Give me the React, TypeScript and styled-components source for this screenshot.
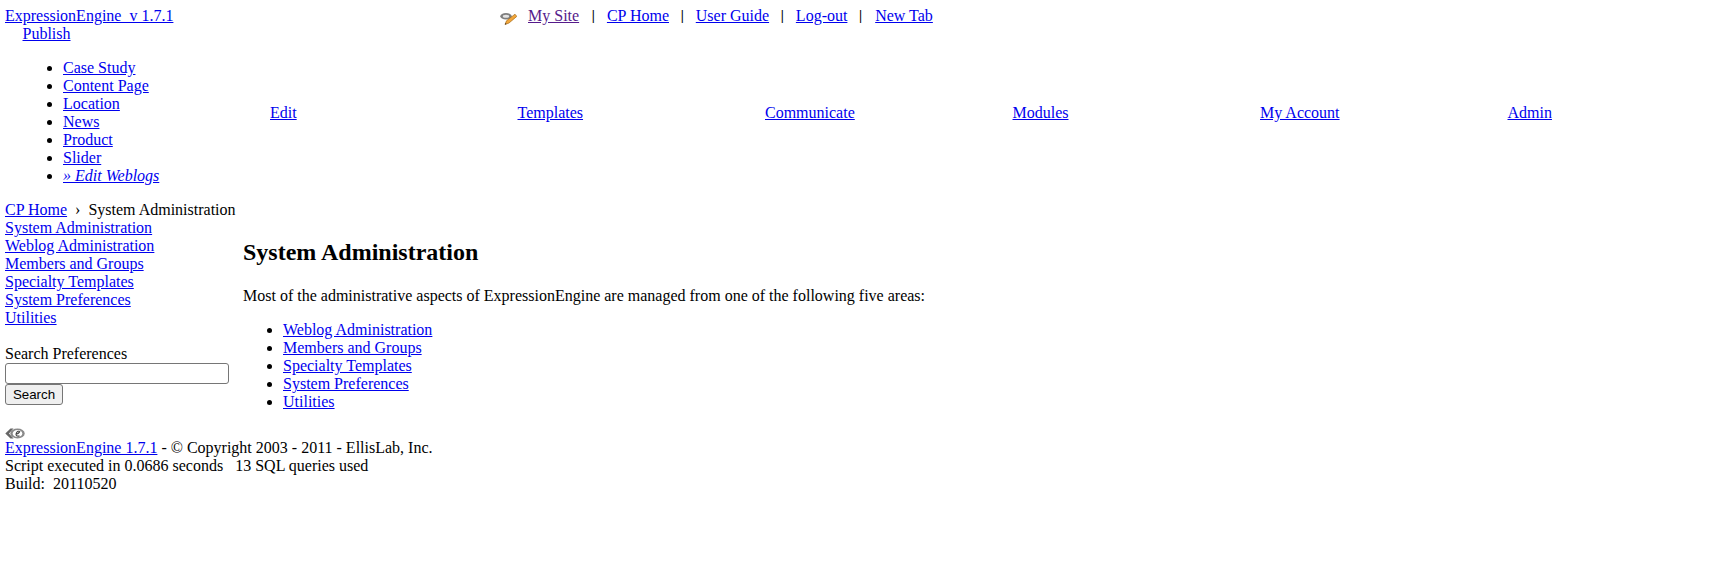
import React from "react";
import styled, { createGlobalStyle } from "styled-components";

const Global = createGlobalStyle`
  html, body { margin: 0; padding: 0; background: #fff; }
  body { font-family: "Liberation Serif", "Times New Roman", serif; font-size: 16px; line-height: 18px; color: #000; }
  a { color: #0000ee; text-decoration: underline; }
`;
const Page = styled.div`padding: 7px 5px 0;`;
const Header = styled.header`display: flex; height: 18px;`;
const Brand = styled.div`width: 495px; flex: none;`;
const TopLinks = styled.nav`display: flex; align-items: center;`;
const SiteIcon = styled.svg`width: 17px; height: 13px; margin-right: 11px; margin-top: 4px;`;
const Visited = styled.a`color: #551a8b; padding-right: 1px;`;
const Sep = styled.span<{ $wide?: boolean }>`
  margin: 0 ${(p) => (p.$wide ? "13px" : "12px")} 0 11.7px;
  font-size: 14px;
  font-weight: 700;
  color: #000;
`;
const MainNav = styled.nav`display: grid; grid-template-columns: 265px repeat(6, 247.5px); align-items: center;`;
const PublishCell = styled.div`padding-left: 17.5px;`;
const SubList = styled.ul`margin: 16px 0; padding-left: 40.5px;`;
const EditItem = styled.a`font-style: italic;`;
const Crumb = styled.div`height: 18px;`;
const Columns = styled.div`display: flex;`;
const Sidebar = styled.aside`width: 238px; flex: none;`;
const SideLink = styled.a`display: block;`;
const SearchForm = styled.form`margin-top: 18px;`;
const SearchInput = styled.input`display: block; box-sizing: border-box; width: 224px; height: 21px; margin: 0; padding: 1px 2px; border: 1px solid #767676; border-radius: 3px; background: #fff;`;
const SearchButton = styled.button`display: block; box-sizing: border-box; width: 58px; height: 21px; margin: 0; padding: 0; border: 1px solid #767676; border-radius: 3px; background: #efefef; color: #000; font: 13.33px "Liberation Sans", Arial, sans-serif;`;
const Content = styled.main`flex: 1;`;
const Title = styled.h1`font-size: 24px; line-height: 27px; font-weight: 700; margin: 20px 0 21px;`;
const Para = styled.p`margin: 16px 0;`;
const ContentList = styled.ul`margin: 16px 0 0; padding-left: 40px;`;
const Footer = styled.footer`margin-top: 0;`;
const FooterLogo = styled.svg`display: block; width: 20px; height: 11px; margin-top: 17px;`;

const subs = ["Case Study", "Content Page", "Location", "News", "Product", "Slider"];
const tabs = ["Edit", "Templates", "Communicate", "Modules", "My Account", "Admin"];
const side = ["System Administration", "Weblog Administration", "Members and Groups", "Specialty Templates", "System Preferences", "Utilities"];
const areas = side.slice(1);

export default function App() {
  return (
    <Page>
      <Global />
      <Header>
        <Brand><a href="#">ExpressionEngine&nbsp; v 1.7.1</a></Brand>
        <TopLinks>
          <SiteIcon viewBox="0 0 17 13">
            <ellipse cx="6" cy="4.2" rx="5.7" ry="3.2" fill="#7f7f7f" />
            <ellipse cx="6" cy="4.2" rx="3.2" ry="1.5" fill="#e4e4e4" />
            <path d="M15 2.2 L6.5 8.8 L5 12.5 L9 11 L16.8 4.4 Z" fill="#f2a63a" stroke="#a66a12" strokeWidth="0.7" />
            <path d="M5.4 11 L5 12.5 L6.6 11.9 Z" fill="#333" />
          </SiteIcon>
          <Visited href="#">My Site</Visited><Sep>|</Sep>
          <a href="#">CP Home</a><Sep>|</Sep>
          <a href="#">User Guide</a><Sep>|</Sep>
          <a href="#">Log-out</a><Sep $wide>|</Sep>
          <a href="#">New Tab</a>
        </TopLinks>
      </Header>
      <MainNav>
        <PublishCell>
          <a href="#">Publish</a>
          <SubList>
            {subs.map((s) => <li key={s}><a href="#">{s}</a></li>)}
            <li><EditItem href="#">» Edit Weblogs</EditItem></li>
          </SubList>
        </PublishCell>
        {tabs.map((t) => <div key={t}><a href="#">{t}</a></div>)}
      </MainNav>
      <Crumb><a href="#">CP Home</a>&nbsp;&nbsp;›&nbsp;&nbsp;System Administration</Crumb>
      <Columns>
        <Sidebar>
          {side.map((s) => <SideLink href="#" key={s}>{s}</SideLink>)}
          <SearchForm>
            Search Preferences
            <SearchInput type="text" />
            <SearchButton type="button">Search</SearchButton>
          </SearchForm>
        </Sidebar>
        <Content>
          <Title>System Administration</Title>
          <Para>Most of the administrative aspects of ExpressionEngine are managed from one of the following five areas:</Para>
          <ContentList>
            {areas.map((s) => <li key={s}><a href="#">{s}</a></li>)}
          </ContentList>
        </Content>
      </Columns>
      <Footer>
        <FooterLogo viewBox="0 0 20 11">
          <path d="M0.3 5.5 L5.5 0.6 L8.5 0.6 L4 5.5 L8.5 10.4 L5.5 10.4 Z" fill="#666" />
          <ellipse cx="12.5" cy="5.5" rx="7.2" ry="5" fill="#8a8a8a" />
          <ellipse cx="12.5" cy="5.5" rx="4.8" ry="3.6" fill="#fff" />
          <path d="M10.5 6.2 Q13.5 6.2 14.8 3.6 Q12.8 2.4 11.4 5 Q9.8 8.6 14.6 8" fill="none" stroke="#444" strokeWidth="1.1" />
        </FooterLogo>
        <div><a href="#">ExpressionEngine 1.7.1</a> - © Copyright 2003 - 2011 - EllisLab, Inc.</div>
        <div>Script executed in 0.0686 seconds &nbsp; 13 SQL queries used</div>
        <div>Build: &nbsp;20110520</div>
      </Footer>
    </Page>
  );
}
